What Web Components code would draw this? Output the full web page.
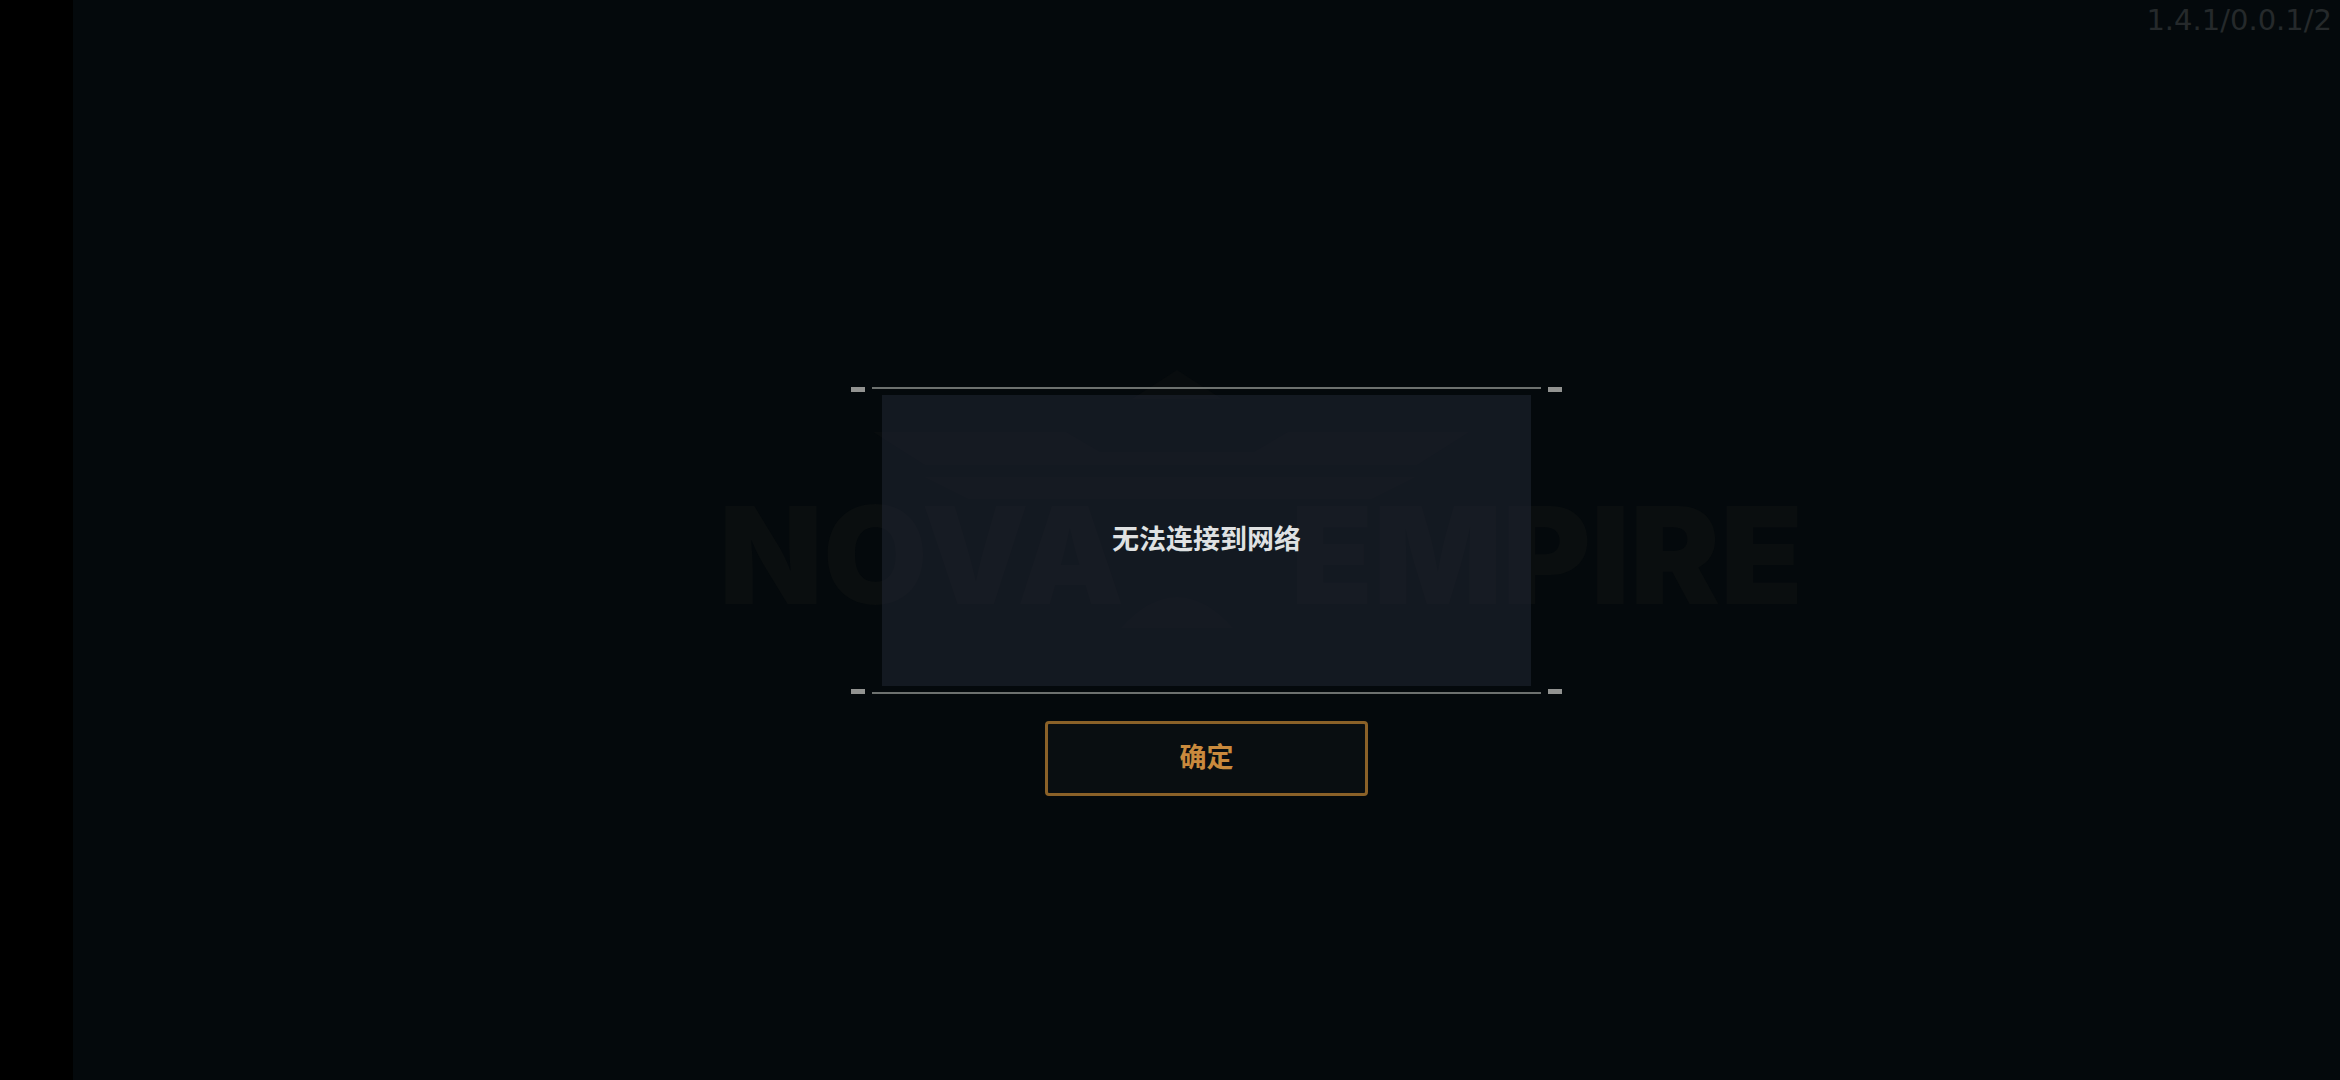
<!DOCTYPE html>
<html lang="zh-CN">
<head>
<meta charset="utf-8">
<title>Nova Empire</title>
<style>
  body {
    margin: 0;
    background: #000;
    font-family: "Noto Sans CJK SC", sans-serif;
  }
</style>
</head>
<body>
<game-screen>
  <nova-logo slot="backdrop"></nova-logo>
  <version-label slot="version">1.4.1/0.0.1/2</version-label>
  <message-frame slot="dialog">无法连接到网络</message-frame>
  <confirm-button slot="action">确定</confirm-button>
</game-screen>

<script>
class GameScreen extends HTMLElement {
  constructor() {
    super();
    this.attachShadow({ mode: "open" });
    this.shadowRoot.innerHTML = `
      <style>
        :host {
          display: grid;
          grid-template-rows: 1fr auto 1fr;
          justify-items: center;
          min-height: 100vh;
          margin-left: 73px;
          background: #04090c;
        }
        slot[name="version"]::slotted(*) {
          grid-area: 1 / 1;
          justify-self: end;
          align-self: start;
        }
        slot[name="backdrop"]::slotted(*) {
          grid-area: 1 / 1 / 4 / 2;
          align-self: center;
        }
        slot[name="dialog"]::slotted(*) {
          grid-area: 2 / 1;
          z-index: 1;
        }
        slot[name="action"]::slotted(*) {
          grid-area: 3 / 1;
          align-self: start;
          margin-top: 27px;
          z-index: 1;
        }
      </style>
      <slot name="backdrop"></slot>
      <slot name="version"></slot>
      <slot name="dialog"></slot>
      <slot name="action"></slot>
    `;
  }
}

class NovaLogo extends HTMLElement {
  constructor() {
    super();
    this.attachShadow({ mode: "open" });
    this.shadowRoot.innerHTML = `
      <style>
        :host {
          display: block;
        }
        svg {
          display: block;
          width: 1224px;
          max-width: 100%;
          height: auto;
        }
        text {
          font: 900 135px Inter, "Liberation Sans", sans-serif;
        }
      </style>
      <svg viewBox="-20 0 1224 360" aria-hidden="true">
        <g fill="#080c0e">
          <path d="M562 10l45 29h-90z"/>
          <path d="M258 72h193l34 20h154l34-20h181l-52 33H310z"/>
          <path d="M310 117h490l-44 22H354z"/>
          <path d="M506 268q56-62 112 0z"/>
        </g>
        <g fill="#0a0e0f">
          <text x="104" y="244">NOVA</text>
          <text x="1188" y="244" text-anchor="end">EMPIRE</text>
        </g>
      </svg>
    `;
  }
}

class VersionLabel extends HTMLElement {
  constructor() {
    super();
    this.attachShadow({ mode: "open" });
    this.shadowRoot.innerHTML = `
      <style>
        :host {
          display: block;
          padding: 2px 8px 0 0;
          color: #25292b;
          font: 400 29px/36px "DejaVu Sans", sans-serif;
        }
      </style>
      <slot></slot>
    `;
  }
}

class MessageFrame extends HTMLElement {
  constructor() {
    super();
    this.attachShadow({ mode: "open" });
    this.shadowRoot.innerHTML = `
      <style>
        :host {
          display: block;
        }
        .rule {
          display: flex;
          align-items: flex-start;
          gap: 7px;
          height: 5px;
        }
        .rule.bottom {
          align-items: flex-end;
        }
        .rule::before,
        .rule::after {
          content: "";
          width: 14px;
          height: 5px;
          background: #929391;
        }
        .line {
          flex: 1;
          height: 2px;
          background: #6d716f;
        }
        .panel {
          display: flex;
          align-items: center;
          justify-content: center;
          box-sizing: border-box;
          width: 649px;
          min-height: 291px;
          margin: 3px 31px;
          padding: 24px 24px 28px;
          background: rgba(34, 41, 54, 0.52);
          color: #dfe1e2;
          font-size: 27px;
          font-weight: 700;
          line-height: 40px;
        }
        p {
          margin: 0;
        }
      </style>
      <div class="rule"><span class="line"></span></div>
      <div class="panel"><p><slot></slot></p></div>
      <div class="rule bottom"><span class="line"></span></div>
    `;
  }
}

class ConfirmButton extends HTMLElement {
  constructor() {
    super();
    this.attachShadow({ mode: "open" });
    this.shadowRoot.innerHTML = `
      <style>
        :host {
          display: block;
        }
        button {
          display: block;
          width: 323px;
          height: 75px;
          padding: 0 0 4px;
          border: 3px solid #8a6128;
          border-radius: 4px;
          background: #090e11;
          color: #c98a3d;
          font-family: inherit;
          font-size: 27px;
          font-weight: 700;
          line-height: 40px;
          cursor: pointer;
        }
      </style>
      <button type="button"><slot></slot></button>
    `;
  }
}

customElements.define("game-screen", GameScreen);
customElements.define("nova-logo", NovaLogo);
customElements.define("version-label", VersionLabel);
customElements.define("message-frame", MessageFrame);
customElements.define("confirm-button", ConfirmButton);
</script>
</body>
</html>
